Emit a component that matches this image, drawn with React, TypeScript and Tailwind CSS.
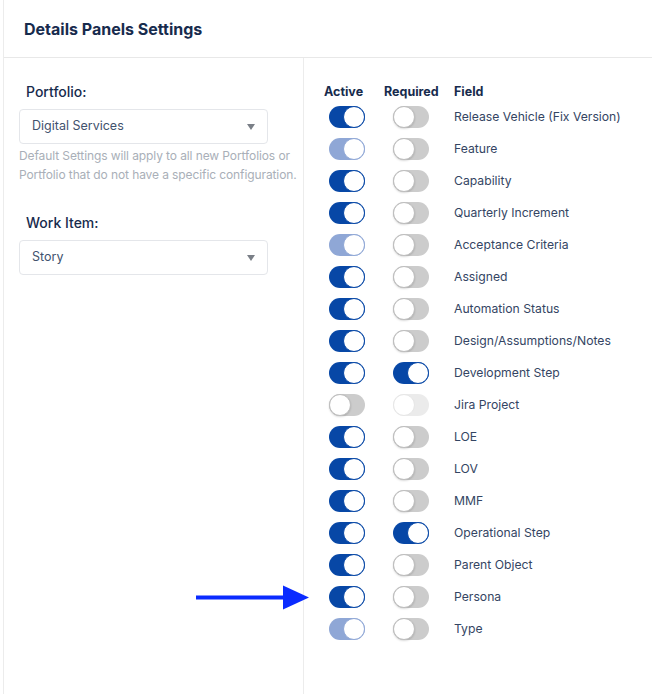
type Row = { field: string; active: 'on' | 'off' | 'locked'; required: 'on' | 'off' | 'disabled' }

const rows: Row[] = [
  { field: 'Release Vehicle (Fix Version)', active: 'on', required: 'off' },
  { field: 'Feature', active: 'locked', required: 'off' },
  { field: 'Capability', active: 'on', required: 'off' },
  { field: 'Quarterly Increment', active: 'on', required: 'off' },
  { field: 'Acceptance Criteria', active: 'locked', required: 'off' },
  { field: 'Assigned', active: 'on', required: 'off' },
  { field: 'Automation Status', active: 'on', required: 'off' },
  { field: 'Design/Assumptions/Notes', active: 'on', required: 'off' },
  { field: 'Development Step', active: 'on', required: 'on' },
  { field: 'Jira Project', active: 'off', required: 'disabled' },
  { field: 'LOE', active: 'on', required: 'off' },
  { field: 'LOV', active: 'on', required: 'off' },
  { field: 'MMF', active: 'on', required: 'off' },
  { field: 'Operational Step', active: 'on', required: 'on' },
  { field: 'Parent Object', active: 'on', required: 'off' },
  { field: 'Persona', active: 'on', required: 'off' },
  { field: 'Type', active: 'locked', required: 'off' },
]

function Toggle({ state }: { state: 'on' | 'off' | 'locked' | 'disabled' }) {
  if (state === 'on' || state === 'locked') {
    const locked = state === 'locked'
    return (
      <div
        className={`flex h-[22px] w-[36px] items-center justify-end rounded-full ${locked ? 'bg-[#8fa7d6]' : 'bg-[#0747a6]'}`}
      >
        <div
          className={`h-[22px] w-[22px] rounded-full border bg-white ${locked ? 'border-[#8fa7d6]' : 'border-[#0747a6]'}`}
        />
      </div>
    )
  }
  const disabled = state === 'disabled'
  return (
    <div
      className={`flex h-[22px] w-[36px] items-center justify-start rounded-full ${disabled ? 'bg-[#ebebeb]' : 'bg-[#cccccc]'}`}
    >
      <div
        className={`h-[22px] w-[22px] rounded-full border bg-white ${disabled ? 'border-[#e6e6e6]' : 'border-[#bdbdbd] shadow-[0_1px_2px_rgba(0,0,0,0.15)]'}`}
      />
    </div>
  )
}

function Select({ value }: { value: string }) {
  return (
    <div className="flex h-[35px] w-[249px] items-center justify-between rounded border border-[#e4e6ea] bg-white pl-[12px] pr-[10px] text-[12.5px] text-[#42526e]">
      <span>{value}</span>
      <svg width="8" height="6" viewBox="0 0 8 6" className="mr-[2px]">
        <path d="M0 0 L8 0 L4 6 Z" fill="#7a7f87" />
      </svg>
    </div>
  )
}

export default function App() {
  return (
    <div
      className="h-[694px] w-[652px] overflow-hidden bg-white pl-[3px]"
      style={{ fontFamily: 'Inter, "Noto Sans", sans-serif' }}
    >
      <div className="flex h-full flex-col border-l border-[#ececec] bg-white">
        <div className="flex h-[58px] shrink-0 items-center border-b border-[#e8e8e8] pl-[20px]">
          <h1 className="text-[16px] font-bold text-[#172b4d]">Details Panels Settings</h1>
        </div>
        <div className="flex flex-1">
          <div className="w-[300px] shrink-0 border-r border-[#ececec] pl-[15px] pt-[23px]">
            <div className="pl-[7px] text-[14px] font-medium text-[#172b4d]">Portfolio:</div>
            <div className="mt-[7px]">
              <Select value="Digital Services" />
            </div>
            <p className="mt-[2px] whitespace-nowrap text-[12px] leading-[19px] tracking-[-0.1px] text-[#a9afb8]">
              Default Settings will apply to all new Portfolios or
              <br />
              Portfolio that do not have a specific configuration.
            </p>
            <div className="mt-[28px] pl-[7px] text-[14px] font-medium text-[#172b4d]">Work Item:</div>
            <div className="mt-[7px]">
              <Select value="Story" />
            </div>
          </div>
          <div className="relative flex-1 pl-[20px] pt-[25px]">
            <div className="flex h-[18px] items-center text-[12.5px] font-bold text-[#172b4d]">
              <div className="w-[60px]">Active</div>
              <div className="w-[70px]">Required</div>
              <div>Field</div>
            </div>
            <div className="flex flex-col">
              {rows.map((r) => (
                <div key={r.field} className="flex h-[32px] items-center">
                  <div className="w-[69px] pl-[5px]">
                    <Toggle state={r.active} />
                  </div>
                  <div className="w-[61px]">
                    <Toggle state={r.required} />
                  </div>
                  <div className="text-[12.2px] text-[#344563]">{r.field}</div>
                </div>
              ))}
            </div>
          </div>
        </div>
      </div>
      {/* arrow annotation */}
      <svg
        className="absolute left-[195px] top-[585px]"
        width="115"
        height="26"
        viewBox="0 0 115 26"
      >
        <rect x="1" y="10.5" width="92" height="4" fill="#0a2bff" />
        <path d="M88 0.5 L114 12.5 L88 24.5 Z" fill="#0a2bff" />
      </svg>
    </div>
  )
}
